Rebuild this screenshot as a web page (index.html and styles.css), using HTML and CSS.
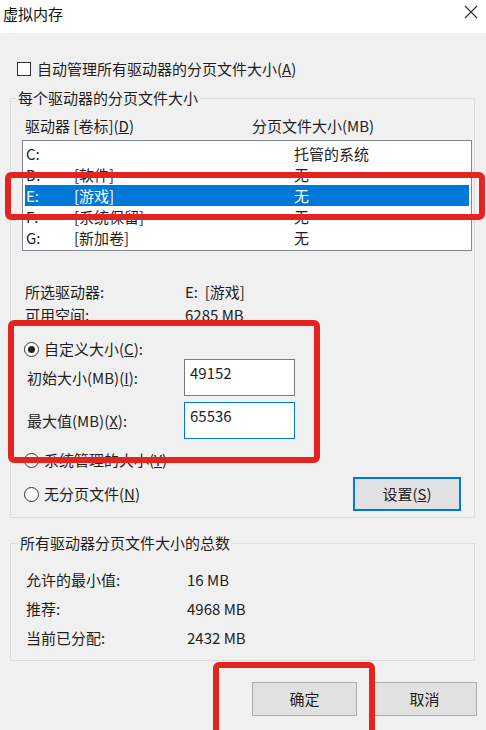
FILE: index.html
```html
<!DOCTYPE html>
<html lang="zh-CN">
<head>
  <meta charset="UTF-8" />
  <title>虚拟内存</title>
  <link rel="stylesheet" href="styles.css">
</head>
<body>
  <div class="titlebar">
    <span class="title">虚拟内存</span>
    <svg class="close" width="14" height="14" viewBox="0 0 14 14">
      <path d="M1 1 L13 13 M13 1 L1 13" stroke="#333" stroke-width="1.2" fill="none" />
    </svg>
  </div>

  <div class="dialog">
    <div class="check-row"><span class="checkbox"></span>自动管理所有驱动器的分页文件大小(<u>A</u>)</div>

    <!-- Por unidade -->
    <fieldset class="group group-drives">
      <legend>每个驱动器的分页文件大小</legend>
      <div class="list-head">
        <span class="col-drive">驱动器 [卷标](<u>D</u>)</span>
        <span>分页文件大小(MB)</span>
      </div>
      <div class="drive-list">
        <div class="drive-row"><span class="c-letter">C:</span><span class="c-label"></span><span>托管的系统</span></div>
        <div class="drive-row"><span class="c-letter">D:</span><span class="c-label">[软件]</span><span>无</span></div>
        <div class="drive-row selected"><span class="c-letter">E:</span><span class="c-label">[游戏]</span><span>无</span></div>
        <div class="drive-row"><span class="c-letter">F:</span><span class="c-label">[系统保留]</span><span>无</span></div>
        <div class="drive-row"><span class="c-letter">G:</span><span class="c-label">[新加卷]</span><span>无</span></div>
      </div>

      <div class="info-row first"><span class="info-key">所选驱动器:</span><span>E:&nbsp;&nbsp;[游戏]</span></div>
      <div class="info-row"><span class="info-key">可用空间:</span><span>6285 MB</span></div>

      <div class="radio-row custom"><span class="radio checked"></span>自定义大小(<u>C</u>):</div>
      <div class="size-row">
        <span class="size-key">初始大小(MB)(<u>I</u>):</span>
        <input class="size-input" type="text" value="49152">
      </div>
      <div class="size-row second">
        <span class="size-key">最大值(MB)(<u>X</u>):</span>
        <input class="size-input focused" type="text" value="65536">
      </div>
      <div class="radio-row managed"><span class="radio"></span>系统管理的大小(<u>Y</u>)</div>
      <div class="last-row">
        <div class="radio-row"><span class="radio"></span>无分页文件(<u>N</u>)</div>
        <button class="btn btn-default btn-set">设置(<u>S</u>)</button>
      </div>
    </fieldset>

    <!-- Total -->
    <fieldset class="group group-total">
      <legend>所有驱动器分页文件大小的总数</legend>
      <div class="total-row"><span class="total-key">允许的最小值:</span><span>16 MB</span></div>
      <div class="total-row"><span class="total-key">推荐:</span><span>4968 MB</span></div>
      <div class="total-row"><span class="total-key">当前已分配:</span><span>2432 MB</span></div>
    </fieldset>

    <div class="footer">
      <button class="btn">确定</button>
      <button class="btn">取消</button>
    </div>
  </div>

  <!-- marcas vermelhas -->
  <div class="mark mark-row"></div>
  <div class="mark mark-size"></div>
  <div class="mark mark-ok"></div>
</body>
</html>
```

FILE: styles.css
```css
* {
  box-sizing: border-box;
}

body {
  margin: 0;
  position: relative;
  height: 730px;
  overflow: hidden;
  background-color: #f0f0f0;
  font-family: "Noto Sans CJK SC", sans-serif;
  font-size: 15px;
  line-height: 20px;
  color: #1e1e1e;
}

.titlebar {
  height: 33px;
  background-color: #fff;
  display: flex;
  justify-content: space-between;
  align-items: flex-start;
  padding: 4px 8px 0 3px;
}

.title {
  color: #111;
}

.close {
  margin-top: 1px;
}

.dialog {
  padding: 26px 11px 0 10px;
}

.check-row {
  display: flex;
  align-items: center;
  height: 20px;
  padding-left: 7px;
}

.checkbox {
  width: 14px;
  height: 14px;
  border: 1px solid #333;
  background: #fff;
  margin-right: 6px;
}

.group {
  margin: 0;
  min-width: 0;
  border: 1px solid #dcdcdc;
}

.group legend {
  padding: 0 2px;
  line-height: 20px;
}

.group-drives {
  margin-top: 9px;
  padding: 8px 2px 6px 11px;
}

.group-drives legend {
  margin-left: -6px;
}

.list-head {
  display: flex;
  height: 20px;
  padding-left: 3px;
  margin-bottom: 4px;
}

.col-drive {
  width: 227px;
}

.drive-list {
  height: 111px;
  padding: 2px;
  background: #fff;
  border: 1px solid #828790;
}

.drive-row {
  display: flex;
  align-items: center;
  height: 21px;
  padding-left: 1px;
}

.drive-row.selected {
  background: #0078d7;
  color: #fff;
}

.c-letter {
  width: 48px;
}

.c-label {
  width: 220px;
}

.info-row {
  display: flex;
  padding-left: 3px;
  margin-top: 3px;
}

.info-row.first {
  margin-top: 31px;
}

.info-key {
  width: 160px;
}

.radio-row {
  display: flex;
  align-items: center;
  height: 20px;
  padding-left: 2px;
}

.radio-row.custom {
  margin-top: 14px;
}

.radio-row.managed {
  margin-top: 11px;
}

.radio {
  width: 15px;
  height: 15px;
  border: 1px solid #333;
  border-radius: 50%;
  background: #fff;
  margin-right: 5px;
  display: flex;
  align-items: center;
  justify-content: center;
}

.radio.checked::after {
  content: "";
  width: 7px;
  height: 7px;
  border-radius: 50%;
  background: #222;
}

.size-row {
  display: flex;
  align-items: center;
}

.size-row.second {
  margin-top: 6px;
}

.size-key {
  width: 162px;
  padding-left: 5px;
}

.size-input {
  width: 111px;
  height: 37px;
  padding: 2px 5px 13px;
  border: 1px solid #7a7a7a;
  background: #fff;
  font: inherit;
  line-height: 20px;
  color: inherit;
  outline: none;
}

.size-input.focused {
  border-color: #0078d7;
}

.last-row {
  display: flex;
  justify-content: space-between;
  align-items: center;
  margin-top: 7px;
}

.btn {
  height: 34px;
  padding: 0;
  font: inherit;
  color: inherit;
  background: #e1e1e1;
  border: 1px solid #adadad;
}

.btn-default {
  border: 2px solid #0078d7;
}

.btn-set {
  width: 108px;
  margin-right: 11px;
}

.group-total {
  margin-top: 15px;
  padding: 17px 0 12px 15px;
}

.group-total legend {
  margin-left: -8px;
}

.total-row {
  display: flex;
}

.total-row + .total-row {
  margin-top: 9px;
}

.total-key {
  width: 161px;
}

.footer {
  display: flex;
  justify-content: flex-end;
  gap: 15px;
  margin-top: 21px;
  margin-right: -2px;
}

.footer .btn {
  width: 105px;
}

.mark {
  position: absolute;
  border: 6px solid #e42420;
  border-radius: 6px;
  pointer-events: none;
}

.mark-row {
  left: 5px;
  top: 172px;
  width: 480px;
  height: 48px;
}

.mark-size {
  left: 8px;
  top: 320px;
  width: 312px;
  height: 143px;
}

.mark-ok {
  left: 213px;
  top: 662px;
  width: 162px;
  height: 90px;
}
```
